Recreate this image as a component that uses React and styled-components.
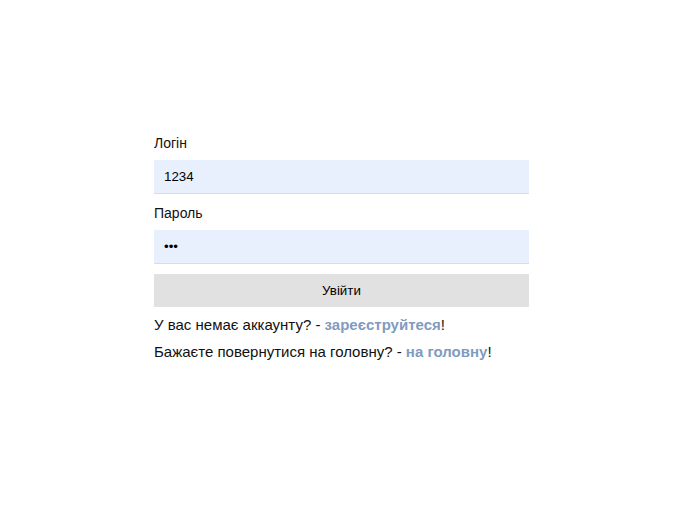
import React from "react";
import styled, { createGlobalStyle } from "styled-components";

const Global = createGlobalStyle`
  html, body { margin: 0; padding: 0; background: #fff; }
  body { font-family: "Liberation Sans", Arial, sans-serif; color: #111; }
`;

const Page = styled.div`
  padding: 135px 0 0 154px;
`;

const Form = styled.form`
  width: 375px;
  display: flex;
  flex-direction: column;
`;

const Label = styled.label`
  font-size: 14px;
  line-height: 16px;
  margin-bottom: 9px;
`;

const Input = styled.input`
  box-sizing: border-box;
  height: 34px;
  width: 100%;
  border: none;
  border-bottom: 1px solid #dcdcdc;
  background: #e8f0fe;
  padding: 0 10px;
  font-family: "Liberation Sans", Arial, sans-serif;
  font-size: 13.33px;
  color: #000;
  outline: none;
  margin-bottom: 11px;
`;

const Button = styled.button`
  box-sizing: border-box;
  height: 33px;
  width: 100%;
  border: none;
  background: #e1e1e1;
  font-family: "Liberation Sans", Arial, sans-serif;
  font-size: 13.33px;
  color: #000;
  margin-top: -1px;
  margin-bottom: 9px;
`;

const Note = styled.p`
  margin: 0 0 10px;
  font-size: 15px;
  line-height: 17px;
`;

const Link = styled.a`
  color: #7f9cc0;
  font-weight: bold;
  text-decoration: none;
`;

export default function App() {
  return (
    <>
      <Global />
      <Page>
        <Form onSubmit={(e) => e.preventDefault()}>
          <Label>Логін</Label>
          <Input defaultValue="1234" />
          <Label>Пароль</Label>
          <Input type="password" defaultValue="123" />
          <Button type="submit">Увійти</Button>
          <Note>
            У вас немає аккаунту? - <Link href="#">зареєструйтеся</Link>!
          </Note>
          <Note>
            Бажаєте повернутися на головну? - <Link href="#">на головну</Link>!
          </Note>
        </Form>
      </Page>
    </>
  );
}
